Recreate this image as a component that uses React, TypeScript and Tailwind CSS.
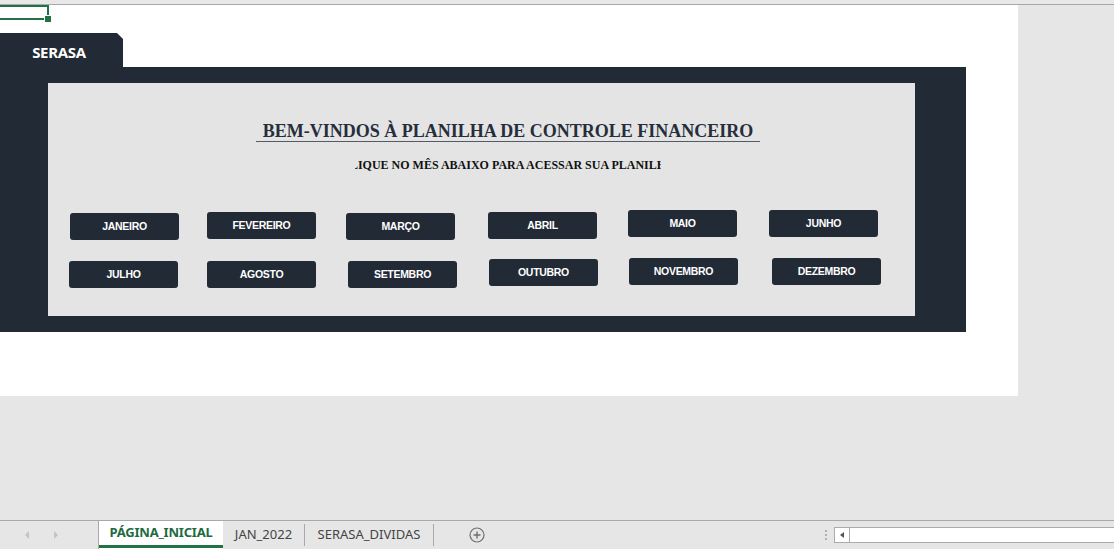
import React from "react";

interface Month {
  name: string;
  cls: string;
}

const rowOne: Month[] = [
  { name: "JANEIRO", cls: "ml-[22px] mt-[3px]" },
  { name: "FEVEREIRO", cls: "ml-[28px] mt-[2px]" },
  { name: "MARÇO", cls: "ml-[30px] mt-[3px]" },
  { name: "ABRIL", cls: "ml-[33px] mt-[2px]" },
  { name: "MAIO", cls: "ml-[31px] mt-0" },
  { name: "JUNHO", cls: "ml-[32px] mt-0" },
];

const rowTwo: Month[] = [
  { name: "JULHO", cls: "ml-[21px] mt-[3px]" },
  { name: "AGOSTO", cls: "ml-[29px] mt-[3px]" },
  { name: "SETEMBRO", cls: "ml-[32px] mt-[3px]" },
  { name: "OUTUBRO", cls: "ml-[32px] mt-[1px]" },
  { name: "NOVEMBRO", cls: "ml-[31px] mt-0" },
  { name: "DEZEMBRO", cls: "ml-[34px] mt-0" },
];

const MonthButton = ({ month }: { month: Month }): JSX.Element => {
  return (
    <button
      className={`${month.cls} w-[109px] h-[27px] shrink-0 rounded-[3px] bg-[#222a36] text-white text-[10.5px] font-bold tracking-[-0.3px] flex items-center justify-center font-['Liberation_Sans',sans-serif]`}
    >
      {month.name}
    </button>
  );
};

const SheetTabs = (): JSX.Element => {
  return (
    <div className="h-[29px] border-t border-[#a9a9a9] bg-[#e6e6e6] flex items-stretch font-['Noto_Sans',sans-serif] text-[13px]">
      <div className="w-[98px] flex items-center">
        <span className="ml-[25px] w-0 h-0 border-y-[4px] border-y-transparent border-r-[4px] border-r-[#c4c4c4]" />
        <span className="ml-[25px] w-0 h-0 border-y-[4px] border-y-transparent border-l-[4px] border-l-[#c4c4c4]" />
      </div>
      <div className="w-[125px] bg-white border-l border-[#a9a9a9] flex flex-col">
        <div className="flex-1 flex items-center justify-center font-bold text-[#1e6b41] text-[13px] tracking-[-0.2px]">
          PÁGINA_INICIAL
        </div>
        <div className="h-[3px] bg-[#217346] mb-[1px]" />
      </div>
      <div className="w-[81px] flex items-center justify-center text-[#444]">JAN_2022</div>
      <div className="w-px bg-[#a9a9a9] my-[3px]" />
      <div className="w-[128px] flex items-center justify-center text-[#444]">SERASA_DIVIDAS</div>
      <div className="w-px bg-[#a9a9a9] my-[3px]" />
      <div className="w-[84px] flex items-center justify-center">
        <svg width="16" height="16" viewBox="0 0 16 16" className="ml-[1px]">
          <circle cx="8" cy="8" r="7" fill="none" stroke="#6f6f6f" strokeWidth="1.2" />
          <path d="M8 4.5v7M4.5 8h7" stroke="#6f6f6f" strokeWidth="1.4" />
        </svg>
      </div>
      <div className="flex-1" />
      <div className="w-[16px] flex flex-col items-center justify-center gap-[2px]">
        <span className="w-[2px] h-[2px] bg-[#b0b0b0]" />
        <span className="w-[2px] h-[2px] bg-[#b0b0b0]" />
        <span className="w-[2px] h-[2px] bg-[#b0b0b0]" />
      </div>
      <div className="w-[280px] my-[6px] h-[16px] border border-r-0 border-[#ababab] bg-white flex">
        <div className="w-[15px] border-r border-[#ababab] flex items-center justify-center">
          <span className="w-0 h-0 border-y-[3px] border-y-transparent border-r-[4px] border-r-[#555]" />
        </div>
      </div>
    </div>
  );
};

export default function App(): JSX.Element {
  return (
    <div className="w-[1114px] h-[549px] bg-[#e6e6e6] flex flex-col overflow-hidden">
      <div className="h-[5px] bg-[#e8e8e8] border-b border-[#a8a8a8] shrink-0" />
      <div className="h-[515px] shrink-0 flex">
        <div className="relative w-[1018px] h-[391px] bg-white">
          {/* selected cell */}
          <div className="absolute left-[-10px] top-0 w-[59px] h-[15px] border-2 border-[#217346]">
            <div className="absolute right-[-4px] bottom-[-4px] w-[6px] h-[6px] bg-[#217346] outline outline-1 outline-white" />
          </div>

          <div className="pt-[28px]">
            <div className="w-[123px] h-[34px] bg-[#222a35] [clip-path:polygon(0_0,117px_0,123px_6px,123px_100%,0_100%)] flex items-center justify-center pr-[5px] pt-[4px]">
              <span className="text-white font-bold text-[15px] font-['Open_Sans',sans-serif] tracking-[-0.3px]">
                SERASA
              </span>
            </div>
            <div className="w-[966px] h-[265px] bg-[#222a35] pl-[48px] pt-[16px]">
              <div className="w-[867px] h-[233px] bg-[#e4e4e4] flex flex-col pt-[38px]">
                <div className="ml-[208px] w-[504px] h-[21px] border-b border-[#555b66] text-center leading-[20px] text-[18px] font-bold text-[#262e3b] font-['Liberation_Serif',serif] whitespace-nowrap">
                  BEM-VINDOS À PLANILHA DE CONTROLE FINANCEIRO
                </div>
                <div className="ml-[307px] mt-[15px] w-[306px] h-[16px] overflow-hidden flex justify-center leading-[16px] text-[12px] font-bold text-[#111] font-['Liberation_Serif',serif] whitespace-nowrap">
                  <span className="shrink-0">CLIQUE NO MÊS ABAIXO PARA ACESSAR SUA PLANILHA</span>
                </div>
                <div className="mt-[37px] flex items-start">
                  {rowOne.map((m) => (
                    <MonthButton key={m.name} month={m} />
                  ))}
                </div>
                <div className="mt-[18px] flex items-start">
                  {rowTwo.map((m) => (
                    <MonthButton key={m.name} month={m} />
                  ))}
                </div>
              </div>
            </div>
          </div>
        </div>
      </div>
      <SheetTabs />
    </div>
  );
}
